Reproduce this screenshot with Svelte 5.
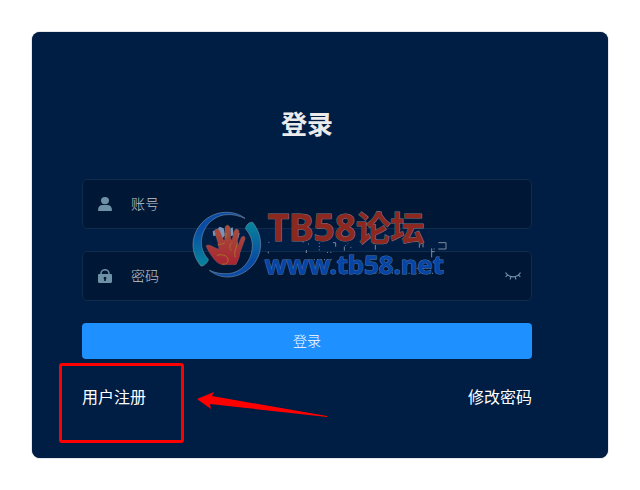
<script lang="ts">
  let account = $state("");
  let password = $state("");
  let showPassword = $state(false);

  function handleSubmit(event: SubmitEvent) {
    event.preventDefault();
  }
</script>

<main class="login-card">
  <form class="login-form" onsubmit={handleSubmit}>
    <h1>登录</h1>

    <div class="field">
      <svg class="field-icon" viewBox="0 0 14 14" aria-hidden="true">
        <ellipse cx="7" cy="3.6" rx="4" ry="3.6" />
        <path d="M0 13.2C0 9.8 2 8 4.6 8h4.8C12 8 14 9.8 14 13.2c0 .5-.3.8-.8.8H.8c-.5 0-.8-.3-.8-.8z" />
      </svg>
      <input type="text" bind:value={account} placeholder="账号" aria-label="账号" autocomplete="username" />
    </div>

    <div class="field">
      <svg class="field-icon" viewBox="0 0 14 14" aria-hidden="true">
        <path d="M3 6V4.5a4 3.8 0 0 1 8 0V6" class="shackle" />
        <path fill-rule="evenodd" d="M1.2 5h11.6c.7 0 1.2.5 1.2 1.2v6.6c0 .7-.5 1.2-1.2 1.2H1.2C.5 14 0 13.5 0 12.8V6.2C0 5.5.5 5 1.2 5zM7 7.7a1.5 1.5 0 0 0-.8 2.7V12h1.6v-1.6A1.5 1.5 0 0 0 7 7.7z" />
      </svg>
      <input
        type={showPassword ? "text" : "password"}
        bind:value={password}
        placeholder="密码"
        aria-label="密码"
        autocomplete="current-password"
      />
      <button type="button" class="toggle" aria-label="显示密码" onclick={() => (showPassword = !showPassword)}>
        <svg viewBox="0 0 16 8" aria-hidden="true">
          <path d="M.5.5C2 3.2 4.8 4.8 8 4.8S14 3.2 15.5.5M2.6 2.8.7 4.8M5.8 4.6 5.2 7.5M10.2 4.6l.6 2.9M13.4 2.8l1.9 2" />
        </svg>
      </button>
    </div>

    <button type="submit" class="submit">登录</button>

    <nav class="links">
      <a href="#register">用户注册</a>
      <a href="#reset">修改密码</a>
    </nav>

    <svg class="watermark" viewBox="0 0 810 255" aria-hidden="true">
      <defs>
        <linearGradient id="ring-left" x1="0" y1="0" x2="0" y2="1">
          <stop offset="0.3" stop-color="#0a4ba4" />
          <stop offset="1" stop-color="#06859b" />
        </linearGradient>
        <linearGradient id="ring-right" x1="0" y1="0" x2="0" y2="1">
          <stop offset="0" stop-color="#06859b" />
          <stop offset="0.7" stop-color="#0a4ba4" />
        </linearGradient>
        <linearGradient id="palm" x1="0" y1="0" x2="0" y2="1">
          <stop offset="0" stop-color="#a8503c" />
          <stop offset="1" stop-color="#a82433" />
        </linearGradient>
      </defs>

      <g class="ring">
        <path fill="url(#ring-left)" d="M195 55C176 41 156 36 134 37 80 40 40 84 39 134c0 22 8 46 24 64 8 2 22-12 22-20-14-16-20-30-21-48 0-46 32-82 74-86 20-2 38 3 57 11z" />
        <path fill="url(#ring-right)" d="M88 211c18 14 36 20 56 20 54-2 96-44 98-96 0-24-8-48-24-68-9-3-22 10-21 20 14 17 20 32 20 50 0 44-32 82-74 84-20 1-37-2-55-10z" />
      </g>

      <path class="glint" d="m98 94 14-6 7-8 12 5 4 20-12 17-9-16-14 2zM151 85l7-3 3 24-9 3zM172 98l7 2-4 14-5 2z" />
      <path class="hand" fill="url(#palm)" d="M78 137c6-4 14-1 21 3l17 8c1-8-2-18-4-26l-8-26c-2-10 11-12 15-4l12 29 3-1 1-37c1-10 14-10 15 0l2 35 4 1 7-26c3-9 15-7 14 3l-6 40 3 1 9-23c4-9 15-6 12 4l-15 40c-1 15-6 23-12 36h-43c-14-4-22-14-30-26-6-9-12-18-17-31z" />
      <path class="lines" d="M113 135c6-3 16-2 21-6M110 166c20-5 35 2 34 15 0 9-8 13-18 11M156 128c-8 8-8 14-2 24M173 128l-7 22c-3 10-2 14 0 22M138 98v16" />

      <g class="specks">
        <path d="M265 127h3M265 155v5M379 150v9M459 128h8v12M493 140v12M586 135v14M718 133v10M729 130v12M755 145v27M755 155h9M775 128h23v19h-23" />
        <path class="dots" d="M368 126h8M384 132h8M418 128v24M495 138l14-12M511 142h3M441 157h14M402 179h56M710 205h46M586 219h60M676 220h90M761 147h6" />
      </g>

      <text class="brand" x="263" y="123"><tspan class="latin">TB58</tspan>论坛</text>
      <text class="site" x="254" y="221">www.tb58.net</text>
    </svg>

    <div class="highlight" aria-hidden="true"></div>
    <svg class="arrow" viewBox="0 0 130 30" aria-hidden="true">
      <path d="M0 9 17 2l-2 4 115 20v1L13 14l1 5z" />
    </svg>
  </form>
</main>

<style>
  :global(body) { background: #fff; }

  .login-card { margin: 32px; padding: 71px 76px 50px 50px; border-radius: 8px; background: #001d44; box-shadow: 0 0 1px #001d44; font-family: "Noto Sans CJK SC", sans-serif; color: #fff; }
  .login-form { position: relative; }
  h1 { margin: 0 0 36px; color: #ebebeb; font-size: 26px; font-weight: 700; line-height: 40px; text-align: center; }

  .field { display: flex; align-items: center; box-sizing: border-box; height: 50px; margin-bottom: 22px; padding: 0 10px 0 15px; border: 1px solid #102b4b; border-radius: 5px; background: #001836; }
  .field-icon { flex: none; width: 14px; height: 14px; fill: #6f91a8; }
  .shackle { fill: none; stroke: #6f91a8; stroke-width: 1.5; }
  input { flex: 1; min-width: 0; height: 46px; margin: 0 0 2px 19px; padding: 0; border: 0; outline: none; background: transparent; color: #fff; font: inherit; font-size: 14px; font-weight: 300; }
  input::placeholder { color: #c0c6ce; opacity: 1; }
  .toggle { display: flex; padding: 0; border: 0; background: none; cursor: pointer; }
  .toggle svg { width: 16px; height: 8px; fill: none; stroke: #6f91a8; stroke-width: 1.2; }

  .submit { display: block; width: 100%; height: 36px; padding: 0 0 2px; border: 0; border-radius: 4px; background: #1e90ff; color: #fff; font: inherit; font-size: 14px; font-weight: 300; cursor: pointer; }
  .links { display: flex; justify-content: space-between; margin-top: 25px; font-size: 16px; line-height: 24px; }
  a { color: #fff; text-decoration: none; }

  .watermark { position: absolute; top: 97px; left: 98px; width: 270px; height: 85px; pointer-events: none; }
  .ring path { stroke: #7186a5; stroke-width: 2; }
  .glint { fill: #7c94ba; }
  .hand { stroke: #8a6670; stroke-width: 1; }
  .lines { fill: none; stroke: #a8702a; stroke-width: 3; }
  .specks { fill: none; stroke: #7d8b9e; stroke-width: 3; }
  .dots { stroke-dasharray: 3 7; }
  .brand, .site { font-weight: 700; stroke-width: 3; paint-order: stroke; }
  .brand { fill: #8c2820; stroke: #7f7480; font-size: 103px; }
  .latin { font-family: "Noto Sans", sans-serif; font-size: 111px; }
  .site { fill: #0645a5; stroke: #4d73aa; font-family: "Noto Sans", sans-serif; font-size: 77px; }

  .highlight { position: absolute; top: 260px; left: -23px; box-sizing: border-box; width: 125px; height: 80px; border: 3px solid #f00; border-radius: 3px; pointer-events: none; }
  .arrow { position: absolute; top: 287px; left: 115px; width: 130px; height: 30px; fill: #f00; pointer-events: none; }
</style>
